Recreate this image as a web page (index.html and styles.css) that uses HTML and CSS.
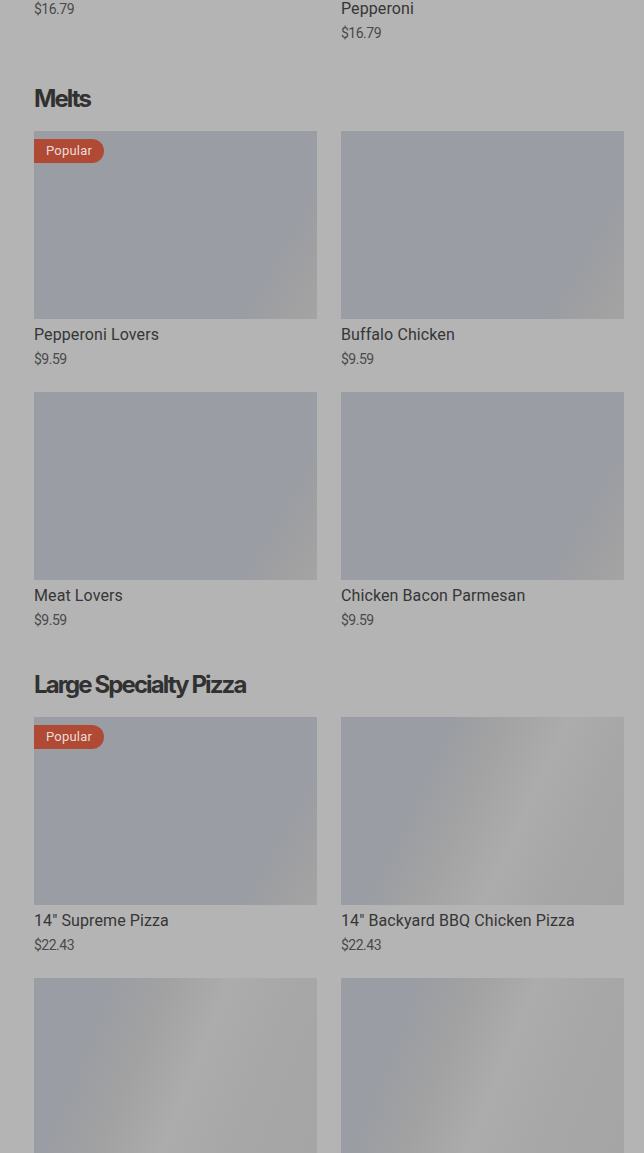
FILE: index.html
```html
<!DOCTYPE html>
<html lang="en">
<head>
<meta charset="utf-8">
<title>Menu</title>
<link rel="stylesheet" href="styles.css">
</head>
<body>
<main class="menu">
  <div class="grid cut">
    <div class="card">
      <div class="price">$16.79</div>
    </div>
    <div class="card">
      <div class="name">Pepperoni</div>
      <div class="price">$16.79</div>
    </div>
  </div>

  <section class="section">
    <h2 class="heading">Melts</h2>
    <div class="grid">
      <div class="card">
        <div class="thumb s-corner"><span class="badge">Popular</span></div>
        <div class="name">Pepperoni Lovers</div>
        <div class="price">$9.59</div>
      </div>
      <div class="card">
        <div class="thumb s-corner"></div>
        <div class="name">Buffalo Chicken</div>
        <div class="price">$9.59</div>
      </div>
      <div class="card">
        <div class="thumb s-corner"></div>
        <div class="name">Meat Lovers</div>
        <div class="price">$9.59</div>
      </div>
      <div class="card">
        <div class="thumb s-corner"></div>
        <div class="name">Chicken Bacon Parmesan</div>
        <div class="price">$9.59</div>
      </div>
    </div>
  </section>

  <section class="section">
    <h2 class="heading">Large Specialty Pizza</h2>
    <div class="grid">
      <div class="card">
        <div class="thumb s-corner"><span class="badge">Popular</span></div>
        <div class="name">14" Supreme Pizza</div>
        <div class="price">$22.43</div>
      </div>
      <div class="card">
        <div class="thumb s-mid"></div>
        <div class="name">14" Backyard BBQ Chicken Pizza</div>
        <div class="price">$22.43</div>
      </div>
      <div class="card">
        <div class="thumb s-left"></div>
      </div>
      <div class="card">
        <div class="thumb s-left"></div>
      </div>
    </div>
  </section>
</main>
</body>
</html>
```

FILE: styles.css
```css
* { box-sizing: border-box; }
html, body {
  margin: 0;
  padding: 0;
  background: #b4b4b4;
  overflow: hidden;
}
body {
  font-family: Roboto, "Liberation Sans", sans-serif;
  color: #343434;
}
.menu {
  padding: 0 20px 0 34px;
}
.grid {
  display: grid;
  grid-template-columns: 283px 283px;
  column-gap: 24px;
  row-gap: 21px;
  align-items: start;
}
.cut {
  margin-top: -3px;
}
.cut .name { margin-top: 0; }
.section {
  margin-top: 37px;
}
.cut + .section { margin-top: 38px; }
.heading {
  margin: 0 0 16px;
  font-family: Inter, "Noto Sans", sans-serif;
  font-size: 24px;
  line-height: 32px;
  font-weight: 700;
  letter-spacing: -1.9px;
  color: #313131;
}
.card {
  display: flex;
  flex-direction: column;
}
.thumb {
  position: relative;
  height: 188px;
  background-color: #9a9da3;
  margin-bottom: 4px;
}
.s-corner {
  background-image: linear-gradient(120deg, #9a9da3 0%, #9a9da3 80%, #a0a0a2 90%, #a4a4a4 100%);
}
.s-mid {
  background-image: linear-gradient(115deg, #9a9da3 0%, #9a9da3 30%, #a3a3a3 45%, #acacac 62%, #a6a6a6 80%, #a4a4a4 100%);
}
.s-left {
  background-image: linear-gradient(112deg, #9a9da3 0%, #9a9da3 22%, #a2a2a2 38%, #acacac 55%, #a7a7a7 75%, #a5a5a5 100%);
}
.badge {
  position: absolute;
  left: 0;
  top: 8px;
  height: 24px;
  padding: 0 12px;
  line-height: 24px;
  font-size: 13px;
  letter-spacing: 0.2px;
  color: #e9dcd8;
  background: #b14a35;
  border-radius: 0 12px 12px 0;
}
.name {
  font-size: 16px;
  line-height: 24px;
  letter-spacing: 0.1px;
  color: #363636;
}
.price {
  font-size: 14px;
  line-height: 24px;
  color: #4a4a4a;
  letter-spacing: -0.5px;
}
```
